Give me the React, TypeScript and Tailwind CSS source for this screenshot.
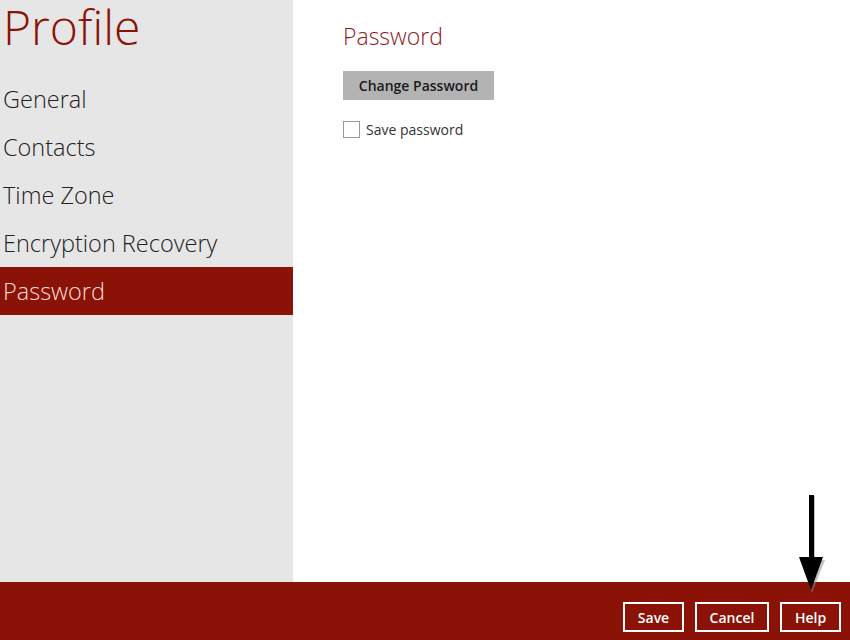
import React from 'react'

const items = ['General', 'Contacts', 'Time Zone', 'Encryption Recovery', 'Password']

const App = () => {
  return (
    <div className="relative flex h-[640px] w-[850px] flex-col bg-white font-['Open_Sans',sans-serif]">
      <div className="flex flex-1">
        {/* sidebar */}
        <aside className="w-[293px] bg-[#e6e6e6]">
          <h1 className="h-[75px] pl-[3px] pt-[3px] text-[48px] font-light leading-[48px] text-[#8b1206]">Profile</h1>
          <ul>
            {items.map((item) => (
              <li
                key={item}
                className={
                  item === 'Password'
                    ? 'h-[48px] bg-[#8b1206] pl-[3px] text-[23.5px] font-light leading-[48px] text-[#f6dcd8]'
                    : 'h-[48px] pl-[3px] text-[23.5px] font-light leading-[48px] text-[#222]'
                }
              >
                {item}
              </li>
            ))}
          </ul>
        </aside>

        {/* content */}
        <main className="flex-1 pl-[50px] pt-[20px]">
          <h2 className="text-[23px] font-light leading-[32px] text-[#8b1a1a]">Password</h2>
          <button className="mt-[19px] h-[29px] w-[151px] bg-[#b3b3b3] text-[14px] font-semibold text-[#1a1a1a]">
            Change Password
          </button>
          <label className="mt-[19px] flex items-center gap-[6px] text-[14px] text-[#333]">
            <span className="h-[17px] w-[17px] border border-[#9a9a9a] bg-white" />
            Save password
          </label>
        </main>
      </div>

      {/* footer */}
      <footer className="flex h-[58px] items-start justify-end gap-[11px] bg-[#8b1206] pr-[9px] pt-[20px]">
        <button className="h-[30px] w-[61px] border-2 border-white text-[14px] font-semibold text-white">Save</button>
        <button className="h-[30px] w-[74px] border-2 border-white text-[14px] font-semibold text-white">Cancel</button>
        <button className="h-[30px] w-[61px] border-2 border-white text-[14px] font-semibold text-white">Help</button>
      </footer>

      {/* pointer arrow */}
      <svg className="absolute left-[796px] top-[493px]" width="30" height="102" viewBox="0 0 30 102">
        <g fill="#888" opacity="0.5">
          <rect x="14" y="3" width="5" height="64" />
          <polygon points="4,67 29,67 16,100" />
        </g>
        <rect x="13" y="2" width="5" height="64" fill="#000" />
        <polygon points="3,64 27,64 15,97" fill="#000" />
      </svg>
    </div>
  )
}

export default App
